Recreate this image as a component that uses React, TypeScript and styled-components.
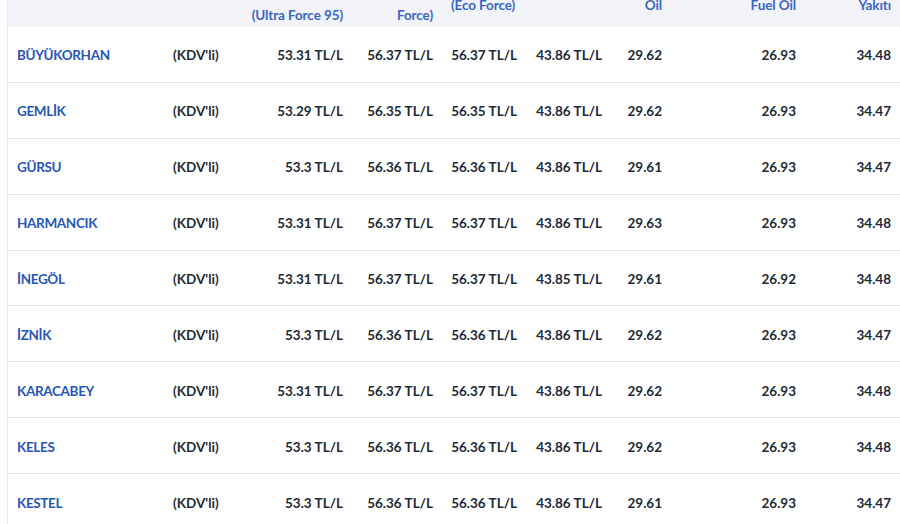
import React from 'react';
import styled, { createGlobalStyle } from 'styled-components';

const GlobalStyle = createGlobalStyle`
  html, body {
    margin: 0;
    padding: 0;
    background: #ffffff;
    overflow: hidden;
  }
  body {
    padding-left: 8px;
    font-family: Lato, 'Liberation Sans', sans-serif;
  }
`;

const cols = '156px 76px 112px 90px 84px 85px 60px 134px 95px';

const Table = styled.div`
  width: 892px;
  margin-top: -57px;
  border-left: 1px solid #e9eaf0;
  margin-left: -1px;
`;

const HeadRow = styled.div`
  display: grid;
  grid-template-columns: ${cols};
  height: 84px;
  background: #f1f3f9;
`;

const HeadCell = styled.div<{ $align?: 'left' | 'right' }>`
  display: flex;
  flex-direction: column;
  justify-content: center;
  padding: 0 9px;
  text-align: ${(p) => p.$align ?? 'right'};
  font-size: 13.5px;
  font-weight: 700;
  line-height: 20px;
  color: #3a66c0;
  white-space: nowrap;
  letter-spacing: -0.1px;
`;

const Row = styled.div`
  box-sizing: border-box;
  display: grid;
  grid-template-columns: ${cols};
  height: 55.9px;
  padding-top: 2px;
  align-items: center;
  border-bottom: 1px solid #e6e8f0;
`;

const Name = styled.div`
  padding: 0 9px;
  font-size: 13.5px;
  font-weight: 700;
  letter-spacing: -0.35px;
  color: #2856b4;
`;

const Cell = styled.div<{ $align?: 'left' | 'right' }>`
  padding: 0 9px;
  text-align: ${(p) => p.$align ?? 'right'};
  font-size: 13.5px;
  font-weight: 700;
  color: #222a36;
  white-space: nowrap;
`;

type Price = {
  town: string;
  v95: string;
  diesel: string;
  eco: string;
  gas: string;
  lpg: string;
  fuel: string;
  heat: string;
};

const data: Price[] = [
  { town: 'BÜYÜKORHAN', v95: '53.31', diesel: '56.37', eco: '56.37', gas: '43.86', lpg: '29.62', fuel: '26.93', heat: '34.48' },
  { town: 'GEMLİK', v95: '53.29', diesel: '56.35', eco: '56.35', gas: '43.86', lpg: '29.62', fuel: '26.93', heat: '34.47' },
  { town: 'GÜRSU', v95: '53.3', diesel: '56.36', eco: '56.36', gas: '43.86', lpg: '29.61', fuel: '26.93', heat: '34.47' },
  { town: 'HARMANCIK', v95: '53.31', diesel: '56.37', eco: '56.37', gas: '43.86', lpg: '29.63', fuel: '26.93', heat: '34.48' },
  { town: 'İNEGÖL', v95: '53.31', diesel: '56.37', eco: '56.37', gas: '43.85', lpg: '29.61', fuel: '26.92', heat: '34.48' },
  { town: 'İZNİK', v95: '53.3', diesel: '56.36', eco: '56.36', gas: '43.86', lpg: '29.62', fuel: '26.93', heat: '34.47' },
  { town: 'KARACABEY', v95: '53.31', diesel: '56.37', eco: '56.37', gas: '43.86', lpg: '29.62', fuel: '26.93', heat: '34.48' },
  { town: 'KELES', v95: '53.3', diesel: '56.36', eco: '56.36', gas: '43.86', lpg: '29.62', fuel: '26.93', heat: '34.48' },
  { town: 'KESTEL', v95: '53.3', diesel: '56.36', eco: '56.36', gas: '43.86', lpg: '29.61', fuel: '26.93', heat: '34.47' },
];

const headers: { lines: string[]; align?: 'left' | 'right' }[] = [
  { lines: ['İlçe'], align: 'left' },
  { lines: [''], align: 'left' },
  { lines: ['Kurşunsuz', 'Benzin', 'VMax 95', '(Ultra Force 95)'] },
  { lines: ['Motorin', 'VMax', 'Diesel Ultra', 'Force)'] },
  { lines: ['Motorin', 'Diesel', '(Eco Force)'], align: 'left' },
  { lines: ['LPG'] },
  { lines: ['Gazyağı', 'Kerosene', 'Oil'] },
  { lines: ['Yüksek', 'Kükürtlü', 'Fuel Oil'] },
  { lines: ['Kalorifer', 'Yakıtı', 'Yakıtı'] },
];

const App = () => {
  return (
    <>
      <GlobalStyle />
      <Table>
        <HeadRow>
          {headers.map((h, i) => (
            <HeadCell key={i} $align={h.align}>
              {h.lines.map((l, j) => (
                <span key={j}>{l}</span>
              ))}
            </HeadCell>
          ))}
        </HeadRow>
        {data.map((d) => (
          <Row key={d.town}>
            <Name>{d.town}</Name>
            <Cell $align="left">(KDV'li)</Cell>
            <Cell>{d.v95} TL/L</Cell>
            <Cell>{d.diesel} TL/L</Cell>
            <Cell>{d.eco} TL/L</Cell>
            <Cell>{d.gas} TL/L</Cell>
            <Cell>{d.lpg}</Cell>
            <Cell>{d.fuel}</Cell>
            <Cell>{d.heat}</Cell>
          </Row>
        ))}
      </Table>
    </>
  );
};

export default App;
